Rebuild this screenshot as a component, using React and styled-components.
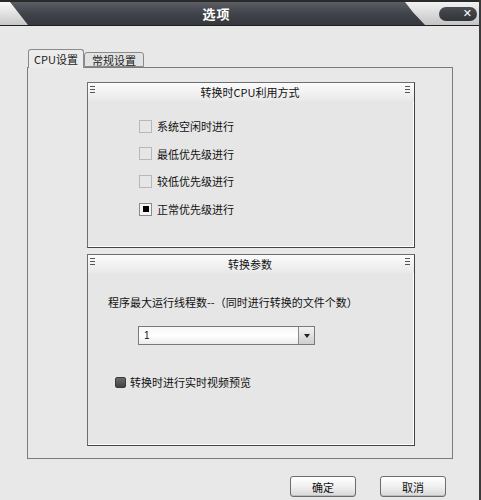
import React, { useState } from "react";
import styled, { createGlobalStyle } from "styled-components";

const GlobalStyle = createGlobalStyle`
  html, body {
    margin: 0;
    padding: 0;
    background: #e8e8e8;
  }
  body {
    font-family: "Noto Sans CJK SC", "Liberation Sans", sans-serif;
    font-size: 11px;
    color: #111;
  }
`;

const Window = styled.div`
  width: 481px;
  height: 500px;
  box-sizing: border-box;
  display: flex;
  flex-direction: column;
  background: #e8e8e8;
  border-right: 2px solid #3a3a3a;
  overflow: hidden;
`;

const TopStrip = styled.div`
  height: 2px;
  background: #2a2a2a;
`;

const TitleBar = styled.div`
  height: 23px;
  display: flex;
  align-items: stretch;
  background: linear-gradient(#5a5d63, #3e4147 55%, #35383d);
  border-bottom: 1px solid #1e1e1e;
`;

const LeftWedge = styled.div`
  width: 28px;
  background: linear-gradient(#fafafa, #c8c8c8);
  clip-path: polygon(0 0, 10px 0, 28px 100%, 0 100%);
`;

const Title = styled.div`
  flex: 1;
  display: flex;
  align-items: center;
  justify-content: center;
  color: #fff;
  font-weight: bold;
  font-size: 13px;
  letter-spacing: 1px;
`;

const RightWedge = styled.div`
  width: 72px;
  display: flex;
  align-items: center;
  justify-content: flex-end;
  padding-right: 2px;
  background: linear-gradient(#f2f2f2, #c4c4c4);
  clip-path: polygon(0 0, 100% 0, 100% 100%, 20px 100%, 8px 45%);
`;

const CloseButton = styled.button`
  width: 38px;
  height: 14px;
  border: none;
  border-radius: 7px;
  background: linear-gradient(#4a4d52, #303338);
  color: #fff;
  font-family: "DejaVu Sans", sans-serif;
  font-weight: bold;
  font-size: 11px;
  line-height: 14px;
  padding: 0 5px 0 0;
  text-align: right;
  cursor: pointer;
`;

const Body = styled.div`
  flex: 1;
  display: flex;
  flex-direction: column;
  padding: 23px 0 0 27px;
`;

const TabRow = styled.div`
  display: flex;
  align-items: flex-end;
  padding-left: 1px;
  height: 18px;
  position: relative;
  z-index: 1;
`;

const Tab = styled.div`
  box-sizing: border-box;
  height: ${(p) => (p.$active ? "19px" : "15px")};
  padding: 0 ${(p) => (p.$active ? "5px" : "7px")};
  margin-bottom: ${(p) => (p.$active ? "-1px" : "0")};
  display: flex;
  align-items: center;
  background: ${(p) => (p.$active ? "#ececec" : "#e2e2e2")};
  border: 1px solid #8a8a8a;
  border-bottom: ${(p) => (p.$active ? "none" : "1px solid #8a8a8a")};
  border-radius: 3px 3px 0 0;
  font-size: 11px;
  color: #222;
  cursor: pointer;
`;

const Panel = styled.div`
  box-sizing: border-box;
  width: 426px;
  height: 392px;
  border: 1px solid #7c7c7c;
  background: #e8e8e8;
  padding: 14px 0 0 59px;
  display: flex;
  flex-direction: column;
  gap: 6px;
`;

const GroupBox = styled.div`
  box-sizing: border-box;
  width: 328px;
  height: ${(p) => p.$height}px;
  border: 1px solid #6e6e6e;
  border-right-color: #444;
  border-bottom-color: #444;
  box-shadow: inset -1px -1px 0 #fff;
  background: #e6e6e6;
  display: flex;
  flex-direction: column;
`;

const GroupHeader = styled.div`
  height: 18px;
  display: flex;
  align-items: center;
  justify-content: space-between;
  padding: 0 4px 0 2px;
  background: linear-gradient(#fbfbfb, #e9e9e9);
  font-size: 11px;
  color: #111;
`;

const Grip = styled.span`
  width: 5px;
  height: 9px;
  align-self: flex-start;
  margin-top: 3px;
  background: repeating-linear-gradient(#555 0 1px, transparent 1px 3px);
`;

const GroupContent = styled.div`
  flex: 1;
  display: flex;
  flex-direction: column;
  padding: ${(p) => p.$pad};
`;

const CheckRow = styled.label`
  display: flex;
  align-items: center;
  gap: 5px;
  height: 14px;
  margin-bottom: 13.7px;
  font-size: 11px;
  cursor: pointer;
`;

const Check = styled.span`
  box-sizing: border-box;
  width: 13px;
  height: 13px;
  border: 1px solid ${(p) => (p.$checked ? "#8a8a8a" : "#b8b8b8")};
  background: ${(p) => (p.$checked ? "#f4f4f4" : "#e6e6e6")};
  display: flex;
  align-items: center;
  justify-content: center;

  &::after {
    content: "";
    width: 6px;
    height: 6px;
    background: ${(p) => (p.$checked ? "#000" : "transparent")};
  }
`;

const Label = styled.div`
  font-size: 11px;
  margin-bottom: 16px;
`;

const Combo = styled.div`
  box-sizing: border-box;
  width: 177px;
  height: 19px;
  margin-left: 30px;
  display: flex;
  border: 1px solid #7a7a7a;
  background: linear-gradient(#f6f6f6, #ffffff 50%, #ececec);
`;

const ComboValue = styled.div`
  flex: 1;
  padding-left: 5px;
  display: flex;
  align-items: center;
  font-family: "Liberation Sans", sans-serif;
  font-size: 10px;
`;

const ComboButton = styled.div`
  width: 15px;
  border-left: 1px solid #8a8a8a;
  background: linear-gradient(#f2f2f2, #cfcfcf);
  display: flex;
  align-items: center;
  justify-content: center;

  &::after {
    content: "";
    border-left: 3px solid transparent;
    border-right: 3px solid transparent;
    border-top: 4px solid #222;
  }
`;

const DarkCheck = styled.span`
  width: 11px;
  height: 11px;
  border-radius: 2px;
  background: linear-gradient(#6a6a6a, #444);
  border: 1px solid #3a3a3a;
  box-sizing: border-box;
`;

const PreviewRow = styled.label`
  display: flex;
  align-items: center;
  gap: 4px;
  margin: 29px 0 0 7px;
  font-size: 11px;
`;

const Footer = styled.div`
  display: flex;
  justify-content: flex-end;
  gap: 24px;
  padding: 17px 33px 0 0;
`;

const Button = styled.button`
  width: 66px;
  height: 21px;
  border: 1px solid #6c6c6c;
  border-radius: 3px;
  background: linear-gradient(#ffffff, #f0f0f0 50%, #d8d8d8);
  box-shadow: inset 0 -1px 0 #bdbdbd;
  font-family: "Noto Sans CJK SC", sans-serif;
  font-size: 11px;
  color: #111;
  padding: 0;
  cursor: pointer;
`;

const priorities = ["系统空闲时进行", "最低优先级进行", "较低优先级进行", "正常优先级进行"];

export default function App() {
  const [tab, setTab] = useState(0);
  const [priority, setPriority] = useState(3);

  return (
    <>
      <GlobalStyle />
      <Window>
        <TopStrip />
        <TitleBar>
          <LeftWedge />
          <Title>选项</Title>
          <RightWedge>
            <CloseButton>✕</CloseButton>
          </RightWedge>
        </TitleBar>
        <Body>
          <TabRow>
            <Tab $active={tab === 0} onClick={() => setTab(0)}>CPU设置</Tab>
            <Tab $active={tab === 1} onClick={() => setTab(1)}>常规设置</Tab>
          </TabRow>
          <Panel>
            <GroupBox $height={166}>
              <GroupHeader>
                <Grip />
                <span>转换时CPU利用方式</span>
                <Grip />
              </GroupHeader>
              <GroupContent $pad="18px 0 0 51px">
                {priorities.map((p, i) => (
                  <CheckRow key={p} onClick={() => setPriority(i)}>
                    <Check $checked={priority === i} />
                    {p}
                  </CheckRow>
                ))}
              </GroupContent>
            </GroupBox>
            <GroupBox $height={192}>
              <GroupHeader>
                <Grip />
                <span>转换参数</span>
                <Grip />
              </GroupHeader>
              <GroupContent $pad="21px 0 0 20px">
                <Label>程序最大运行线程数--（同时进行转换的文件个数）</Label>
                <Combo>
                  <ComboValue>1</ComboValue>
                  <ComboButton />
                </Combo>
                <PreviewRow>
                  <DarkCheck />
                  转换时进行实时视频预览
                </PreviewRow>
              </GroupContent>
            </GroupBox>
          </Panel>
          <Footer>
            <Button>确定</Button>
            <Button>取消</Button>
          </Footer>
        </Body>
      </Window>
    </>
  );
}
